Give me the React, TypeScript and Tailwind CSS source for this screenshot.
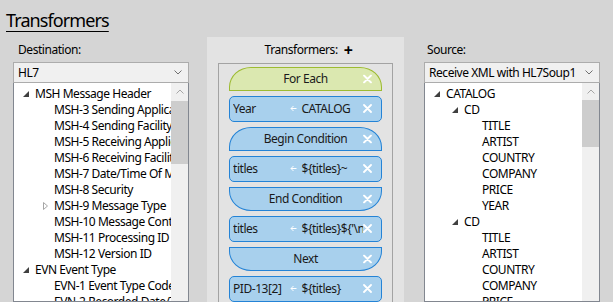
import React from "react";

type Row = { text: string; level: number; icon?: "open" | "closed" };

const destRows: Row[] = [
  { text: "MSH Message Header", level: 0, icon: "open" },
  { text: "MSH-3 Sending Application", level: 1 },
  { text: "MSH-4 Sending Facility", level: 1 },
  { text: "MSH-5 Receiving Application", level: 1 },
  { text: "MSH-6 Receiving Facility", level: 1 },
  { text: "MSH-7 Date/Time Of Message", level: 1 },
  { text: "MSH-8 Security", level: 1 },
  { text: "MSH-9 Message Type", level: 1, icon: "closed" },
  { text: "MSH-10 Message Control ID", level: 1 },
  { text: "MSH-11 Processing ID", level: 1 },
  { text: "MSH-12 Version ID", level: 1 },
  { text: "EVN Event Type", level: 0, icon: "open" },
  { text: "EVN-1 Event Type Code", level: 1 },
  { text: "EVN-2 Recorded Date/Time", level: 1 },
];

const cd = (): Row[] => [
  { text: "CD", level: 1, icon: "open" },
  { text: "TITLE", level: 2 },
  { text: "ARTIST", level: 2 },
  { text: "COUNTRY", level: 2 },
  { text: "COMPANY", level: 2 },
  { text: "PRICE", level: 2 },
  { text: "YEAR", level: 2 },
];

const srcRows: Row[] = [{ text: "CATALOG", level: 0, icon: "open" }, ...cd(), ...cd()];

type Block =
  | { kind: "top" | "bottom"; label: string; green?: boolean }
  | { kind: "map"; target: string; source: string };

const blocks: Block[] = [
  { kind: "top", label: "For Each", green: true },
  { kind: "map", target: "Year", source: "CATALOG" },
  { kind: "top", label: "Begin Condition" },
  { kind: "map", target: "titles", source: "${titles}~" },
  { kind: "bottom", label: "End Condition" },
  { kind: "map", target: "titles", source: "${titles}${'\\n'}" },
  { kind: "bottom", label: "Next" },
  { kind: "map", target: "PID-13[2]", source: "${titles}" },
];

function Cross() {
  return (
    <svg width="9" height="9" viewBox="0 0 9 9" className="shrink-0">
      <path d="M1 1 L8 8 M8 1 L1 8" stroke="white" strokeWidth="1.8" strokeLinecap="round" />
    </svg>
  );
}

function Arrow() {
  return (
    <svg width="7" height="7" viewBox="0 0 7 7" className="shrink-0">
      <path d="M6.5 3.5 H1 M3.5 1 L1 3.5 L3.5 6" stroke="white" strokeWidth="1" fill="none" />
    </svg>
  );
}

function Chevron() {
  return (
    <svg width="8" height="5" viewBox="0 0 8 5">
      <path d="M0.5 0.5 L4 4 L7.5 0.5" stroke="#707070" strokeWidth="1" fill="none" />
    </svg>
  );
}

function Dropdown({ value }: { value: string }) {
  return (
    <div className="h-[21px] flex items-center border border-[#acacac] bg-[#f0f0f0] pl-[4px] pr-[6px]">
      <span className="flex-1 overflow-hidden whitespace-nowrap">{value}</span>
      <Chevron />
    </div>
  );
}

function TreeIcon({ icon }: { icon?: "open" | "closed" }) {
  if (icon === "open")
    return (
      <svg width="6" height="6" viewBox="0 0 6 6">
        <polygon points="6,0 6,6 0,6" fill="#404040" />
      </svg>
    );
  if (icon === "closed")
    return (
      <svg width="5" height="8" viewBox="0 0 5 8">
        <polygon points="0.5,0.5 4.5,4 0.5,7.5" fill="none" stroke="#a6a6a6" strokeWidth="1" />
      </svg>
    );
  return null;
}

function Tree({ rows, indent, thumbTop, thumbHeight }: { rows: Row[]; indent: number; thumbTop: number; thumbHeight: number }) {
  return (
    <div className="flex-1 flex border border-[#828790] border-t-0 bg-white overflow-hidden">
      <div className="flex-1 overflow-hidden pt-[3px]">
        {rows.map((r, i) => (
          <div
            key={i}
            className="h-4 flex items-center whitespace-nowrap"
            style={{ paddingLeft: 3 + r.level * indent }}
          >
            <span className="w-[18px] shrink-0 flex items-center justify-center">
              <TreeIcon icon={r.icon} />
            </span>
            <span>{r.text}</span>
          </div>
        ))}
      </div>
      <div className="w-[17px] shrink-0 bg-[#f0f0f0] flex flex-col">
        <div className="h-[17px] flex items-center justify-center">
          <svg width="8" height="5" viewBox="0 0 8 5">
            <path d="M0.5 4.5 L4 1 L7.5 4.5" stroke="#a6a6a6" strokeWidth="1" fill="none" />
          </svg>
        </div>
        <div className="bg-[#cdcdcd]" style={{ marginTop: thumbTop, height: thumbHeight }} />
      </div>
    </div>
  );
}

function TransformerBlock({ b }: { b: Block }) {
  if (b.kind === "map") {
    return (
      <div className="h-[27px] flex items-center rounded-[5px] border border-[#2483d6] bg-[#a8d0ed] pl-[3px] pr-[9px] text-[#1a1a1a] whitespace-nowrap">
        <span className="w-[57px] overflow-hidden">{b.target}</span>
        <span className="w-[12px] flex items-center">
          <Arrow />
        </span>
        <span className="w-[62px] overflow-hidden">{b.source}</span>
        <span className="flex-1" />
        <Cross />
      </div>
    );
  }
  const shape = b.kind === "top" ? "rounded-t-[22px_20px]" : "rounded-b-[22px_20px]";
  const colors = b.green ? "bg-[#dbe8b0] border-[#9dbb32]" : "bg-[#a8d0ed] border-[#2483d6]";
  return (
    <div className={`h-6 relative flex items-center justify-center border text-[#1a1a1a] ${shape} ${colors}`}>
      <span>{b.label}</span>
      <span className="absolute right-[9px] top-1/2 -translate-y-1/2 flex">
        <Cross />
      </span>
    </div>
  );
}

export default function App() {
  return (
    <div
      className="w-[613px] h-[302px] overflow-hidden bg-[#d5d5d5] text-black text-[12px] tracking-[-0.45px]"
      style={{ fontFamily: '"Noto Sans", "Open Sans", sans-serif' }}
    >
      <div className="pl-[6px] pt-[9px] h-[37px]">
        <span className="text-[18px] leading-[22px] tracking-[-0.9px] underline underline-offset-[4px] decoration-1">
          Transformers
        </span>
      </div>
      <div className="flex pl-[13px] h-[265px]">
        <div className="w-[176px] flex flex-col">
          <div className="h-[25px] pl-[5px] pt-[4px]">Destination:</div>
          <Dropdown value="HL7" />
          <Tree rows={destRows} indent={19} thumbTop={1} thumbHeight={63} />
        </div>
        <div className="ml-[18px] w-[197px] bg-[#e3e3e3] flex flex-col px-[11px]">
          <div className="h-[26px] flex items-center justify-center gap-[6px] pl-[6px]">
            <span>Transformers:</span>
            <span className="text-[16px] font-bold leading-none">+</span>
          </div>
          <div className="flex-1 border border-[#a3a3a3] border-b-0 pt-[3px] px-[10px] flex flex-col gap-[5px] overflow-hidden">
            {blocks.map((b, i) => (
              <TransformerBlock key={i} b={b} />
            ))}
          </div>
        </div>
        <div className="ml-[20px] w-[176px] flex flex-col">
          <div className="h-[25px] pl-[3px] pt-[4px]">Source:</div>
          <Dropdown value="Receive XML with HL7Soup1" />
          <Tree rows={srcRows} indent={18} thumbTop={0} thumbHeight={47} />
        </div>
      </div>
    </div>
  );
}
